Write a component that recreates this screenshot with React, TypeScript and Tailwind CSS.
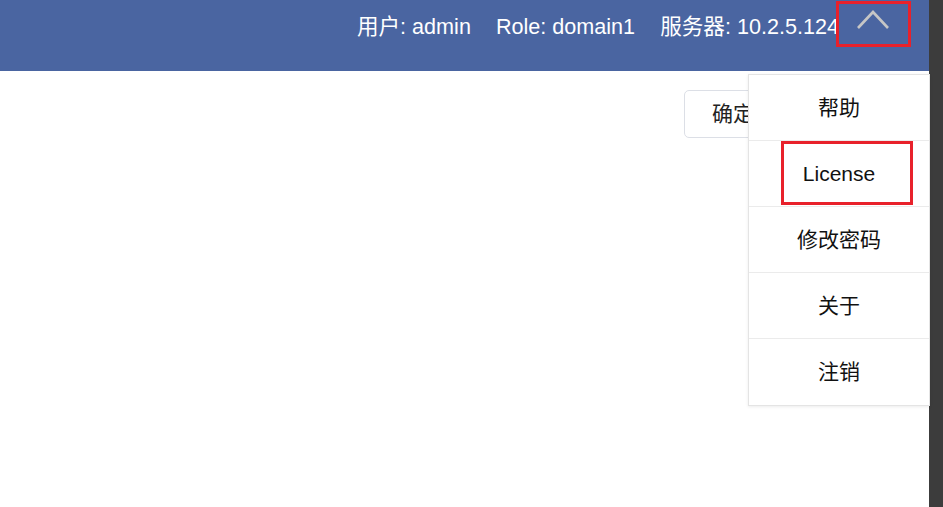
import React from 'react';

const font = { fontFamily: '"Liberation Sans", "Noto Sans CJK SC", sans-serif' };

const menuItems = ['帮助', 'License', '修改密码', '关于', '注销'];

const App = () => (
	<div className="flex w-full h-screen bg-white overflow-hidden" style={font}>
		<div className="relative flex-1 flex flex-col">
			{/* Header ------------------- */}
			<div className="h-[71px] bg-[#4a65a1] flex items-start justify-end pt-[1px] pr-[18px] text-white text-[21.6px]">
				<span className="mt-[12px] leading-[28px]">用户: admin</span>
				<span className="mt-[12px] leading-[28px] ml-[25px]">Role: domain1</span>
				<span className="mt-[12px] leading-[28px] ml-[25px]">服务器: 10.2.5.124</span>
				<div className="-ml-[3px] w-[75px] h-[46px] border-[3px] border-[#e8212b]">
					<svg width="69" height="40" viewBox="0 0 69 40">
						<polyline points="19,24 34,8 49,24" fill="none" stroke="#c6c6c6" strokeWidth="2.6" />
					</svg>
				</div>
			</div>

			{/* Body ------------------- */}
			<div className="flex-1 flex justify-end items-start pt-[19px] pr-[147px]">
				<button className="h-[48px] px-[27px] border border-[#dcdfe6] rounded-[5px] bg-white text-[21px] text-[#222]">
					确定
				</button>
			</div>

			{/* Dropdown menu ------------------- */}
			<div className="absolute left-[748px] top-[74px] w-[182px] bg-white border border-[#e4e4e4] shadow-[0_1px_3px_rgba(0,0,0,0.08)]">
				{menuItems.map((item, i) => (
					<div
						key={item}
						className="relative h-[66px] flex items-center justify-center text-[21px] text-[#111] border-b border-[#ebebeb] last:border-b-0"
					>
						{item}
						{i === 1 && (
							<div className="absolute left-[32px] top-0 w-[132px] h-[64px] border-[3px] border-[#e8212b]"></div>
						)}
					</div>
				))}
			</div>
		</div>

		{/* Scrollbar strip ------------------- */}
		<div className="w-[14px] bg-[#3c3c3c]"></div>
	</div>
);

export default App;
